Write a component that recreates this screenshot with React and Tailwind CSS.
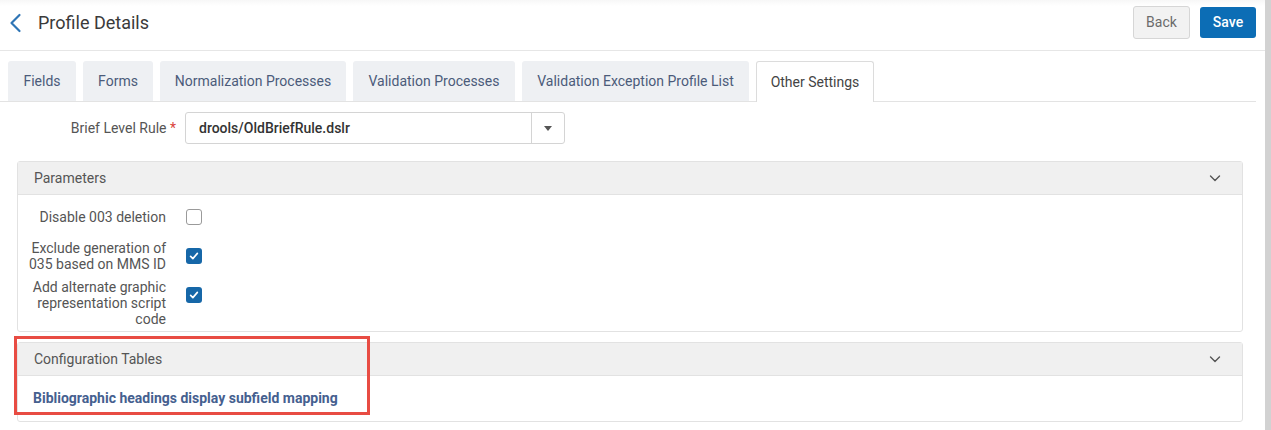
import React from "react";

const tabs = [
  { label: "Fields", w: "w-[68px]" },
  { label: "Forms", w: "w-[70px]" },
  { label: "Normalization Processes", w: "w-[186px]" },
  { label: "Validation Processes", w: "w-[162px]" },
  { label: "Validation Exception Profile List", w: "w-[227px]" },
  { label: "Other Settings", w: "w-[118px]", active: true },
];

function Chevron({ className }) {
  return (
    <svg viewBox="0 0 16 16" className={className} fill="none" stroke="currentColor" strokeWidth="1.4" strokeLinecap="round" strokeLinejoin="round">
      <path d="M3.5 6 8 10.5 12.5 6" />
    </svg>
  );
}

function Checkbox({ checked }) {
  return (
    <div className="h-8 flex items-center">
      {checked ? (
        <div className="w-[16px] h-[16px] rounded-[3px] bg-[#1667a8] flex items-center justify-center">
          <svg viewBox="0 0 16 16" className="w-[12px] h-[12px]" fill="none" stroke="white" strokeWidth="2.2" strokeLinecap="round" strokeLinejoin="round">
            <path d="M3.5 8.5 6.5 11.5 12.5 4.5" />
          </svg>
        </div>
      ) : (
        <div className="w-[16px] h-[16px] rounded-[3px] border border-[#9a9a9a] bg-white" />
      )}
    </div>
  );
}

function ParamRow({ label, checked }) {
  return (
    <div className="flex items-start">
      <div className="w-[148px] min-h-8 flex items-center justify-end text-right text-[14px] leading-[16px] text-[#555]">
        {label}
      </div>
      <div className="ml-[20px]">
        <Checkbox checked={checked} />
      </div>
    </div>
  );
}

function Panel({ title, children }) {
  return (
    <div className="border border-[#e2e2e2] rounded-[3px] bg-white">
      <div className="h-[33px] bg-[#f0f0f0] border-b border-[#e2e2e2] flex items-center justify-between pl-[16px] pr-[19px] text-[14px] text-[#555]">
        <span>{title}</span>
        <Chevron className="w-[16px] h-[16px] text-[#555]" />
      </div>
      {children}
    </div>
  );
}

export default function App() {
  return (
    <div className="flex w-[1271px] h-[430px] bg-white overflow-hidden" style={{ fontFamily: "Roboto, 'Liberation Sans', sans-serif" }}>
      <div className="flex-1 flex flex-col">
        {/* page header */}
        <div className="h-[51px] pb-[5px] flex items-center justify-between border-b border-[#e6e6e6] bg-gradient-to-b from-[#f7f7f7] to-white to-[12%]">
          <div className="flex items-center">
            <svg viewBox="0 0 20 20" className="w-[20px] h-[20px] ml-[5px] text-[#2f75b5]" fill="none" stroke="currentColor" strokeWidth="2.2" strokeLinecap="round" strokeLinejoin="round">
              <path d="M14.5 2 6.5 10l8 8" />
            </svg>
            <span className="ml-[13px] text-[18px] text-[#3a3a3a]">Profile Details</span>
          </div>
          <div className="flex items-center gap-[10px] mr-[9px]">
            <button className="w-[57px] h-[33px] rounded-[3px] bg-[#f2f2f2] border border-[#d6d6d6] text-[14px] text-[#6b6b6b]">Back</button>
            <button className="w-[56px] h-[31px] rounded-[3px] bg-[#0c6db5] text-[14px] font-medium text-white">Save</button>
          </div>
        </div>

        {/* tab strip */}
        <div className="mt-[10px] mr-[9px] flex items-end gap-[7px] pl-[8px] border-b border-[#e3e3e3]">
          {tabs.map((t) =>
            t.active ? (
              <div key={t.label} className={`${t.w} h-[41px] flex items-center justify-center bg-white border border-b-0 border-[#dcdcdc] rounded-t-[3px] text-[14px] text-[#444] -mb-px`}>
                {t.label}
              </div>
            ) : (
              <div key={t.label} className={`${t.w} h-[40px] flex items-center justify-center bg-[#eef0f3] rounded-t-[3px] text-[14px] text-[#4b5b7a]`}>
                {t.label}
              </div>
            )
          )}
        </div>

        {/* brief level rule */}
        <div className="mt-[10px] flex items-center">
          <div className="w-[176px] text-right text-[14px] text-[#555]">
            Brief Level Rule <span className="text-[#d9433b]">*</span>
          </div>
          <div className="ml-[9px] w-[380px] h-[32px] border border-[#d4d4d4] rounded-[3px] flex">
            <div className="flex-1 flex items-center pl-[13px] text-[14px] font-medium text-[#333]">drools/OldBriefRule.dslr</div>
            <div className="w-[33px] border-l border-[#d4d4d4] flex items-center justify-center">
              <svg viewBox="0 0 8 5" className="w-[8px] h-[5px]">
                <path d="M0 0h8L4 5z" fill="#555" />
              </svg>
            </div>
          </div>
        </div>

        {/* parameter & table panels */}
        <div className="relative mt-[17px] ml-[17px] mr-[22px] flex flex-col gap-[10px]">
          <Panel title="Parameters">
            <div className="pt-[6px] pb-[4px] flex flex-col gap-[7px]">
              <ParamRow label="Disable 003 deletion" checked={false} />
              <ParamRow label="Exclude generation of 035 based on MMS ID" checked />
              <ParamRow label="Add alternate graphic representation script code" checked />
            </div>
          </Panel>
          <Panel title="Configuration Tables">
            <div className="h-[45px] flex items-center pl-[15px] text-[14px] font-bold text-[#45608f]">
              Bibliographic headings display subfield mapping
            </div>
          </Panel>
          <div className="absolute left-[-3px] top-[175px] w-[356px] h-[79px] border-[3px] border-[#e84c43]" />
        </div>
      </div>
      {/* scrollbar track */}
      <div className="w-[6px] bg-[#d2d2d2]" />
    </div>
  );
}
